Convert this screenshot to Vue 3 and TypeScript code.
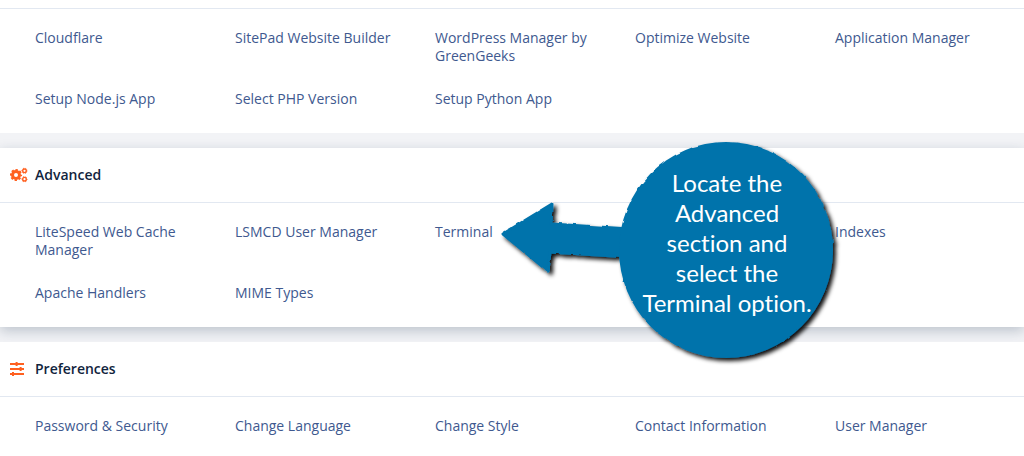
<script setup lang="ts">
interface Tool {
  label: string
  last?: boolean
}
interface Section {
  id: string
  title: string
  active?: boolean
  tools: Tool[]
}

const software: Tool[] = [
  { label: 'Cloudflare' },
  { label: 'SitePad Website Builder' },
  { label: 'WordPress Manager by GreenGeeks' },
  { label: 'Optimize Website' },
  { label: 'Application Manager' },
  { label: 'Setup Node.js App' },
  { label: 'Select PHP Version' },
  { label: 'Setup Python App' },
]

const sections: Section[] = [
  {
    id: 'advanced',
    title: 'Advanced',
    active: true,
    tools: [
      { label: 'LiteSpeed Web Cache Manager' },
      { label: 'LSMCD User Manager' },
      { label: 'Terminal' },
      { label: 'Indexes', last: true },
      { label: 'Apache Handlers' },
      { label: 'MIME Types' },
    ],
  },
  {
    id: 'preferences',
    title: 'Preferences',
    tools: [
      { label: 'Password & Security' },
      { label: 'Change Language' },
      { label: 'Change Style' },
      { label: 'Contact Information' },
      { label: 'User Manager' },
    ],
  },
]
</script>

<template>
  <main class="page">
    <section class="panel">
      <ul class="tools">
        <li v-for="tool in software" :key="tool.label">
          <a href="#">{{ tool.label }}</a>
        </li>
      </ul>
    </section>

    <section
      v-for="section in sections"
      :key="section.id"
      class="panel"
      :class="{ active: section.active }"
      :aria-labelledby="section.id"
    >
      <header class="head">
        <svg v-if="section.id === 'advanced'" class="icon" viewBox="0 0 18 16" aria-hidden="true">
          <g fill="none" stroke="currentColor">
            <circle cx="6" cy="8" r="3.5" stroke-width="3" />
            <circle cx="6" cy="8" r="5.2" stroke-width="1.8" stroke-dasharray="2.3 1.784" stroke-dashoffset="1.15" />
            <circle cx="14.5" cy="3.8" r="1.8" stroke-width="1.4" />
            <circle cx="14.5" cy="3.8" r="2.6" stroke-width="1" stroke-dasharray="1.3 1.423" stroke-dashoffset="0.65" />
            <circle cx="14.5" cy="12.2" r="1.8" stroke-width="1.4" />
            <circle cx="14.5" cy="12.2" r="2.6" stroke-width="1" stroke-dasharray="1.3 1.423" stroke-dashoffset="0.65" />
          </g>
        </svg>
        <svg v-else class="icon" viewBox="0 0 18 16" aria-hidden="true">
          <path
            fill="currentColor"
            d="M0 2h5.600V1h2v1H14v2H7.600V5h-2V4H0zM0 7h9.600V6h2v1H14v2h-2.400v1h-2V9H0zM0 12h2v-1h2v1h10v2H4v1H2v-1H0z"
          />
        </svg>
        <h2 :id="section.id">{{ section.title }}</h2>
      </header>
      <ul class="tools">
        <li v-for="tool in section.tools" :key="tool.label" :class="{ last: tool.last }">
          <a href="#">{{ tool.label }}</a>
        </li>
      </ul>
    </section>

    <aside class="callout">
      <svg class="shape" viewBox="0 0 344 228" aria-hidden="true">
        <defs>
          <filter id="brush" x="-5%" y="-5%" width="112%" height="112%">
            <feTurbulence type="fractalNoise" baseFrequency="0.14" numOctaves="1" seed="4" result="noise" />
            <feDisplacementMap in="SourceGraphic" in2="noise" scale="3" xChannelSelector="R" yChannelSelector="G" result="rough" />
            <feDropShadow in="rough" dx="3" dy="3" stdDeviation="2" flood-color="#000" flood-opacity="0.95" />
          </filter>
        </defs>
        <g filter="url(#brush)" fill="#0073ab">
          <path d="M3 97L52 67L51 87L130 92V120L50 115L48 134Z" stroke="#0073ab" stroke-width="3" stroke-linejoin="round" />
          <ellipse cx="226" cy="113" rx="107" ry="108" />
        </g>
      </svg>
      <p class="message">Locate the<br />Advanced<br />section and<br />select the<br />Terminal option.</p>
    </aside>
  </main>
</template>

<style>
body {
  margin: 0;
}
</style>

<style scoped>
.page {
  position: relative;
  display: flex;
  flex-direction: column;
  gap: 15px;
  height: 100vh;
  padding-top: 8px;
  box-sizing: border-box;
  overflow: hidden;
  background: linear-gradient(#fff 8px, #f2f3f6 8px);
  font-family: "Open Sans", "Noto Sans", sans-serif;
  font-size: 14px;
  line-height: 18px;
}

.panel {
  flex: none;
  background: #fff;
}

.active {
  box-shadow: 0 4px 12px rgba(20, 45, 75, 0.24);
}

.active + .panel {
  position: relative;
}

.head {
  display: flex;
  align-items: center;
  gap: 7px;
  height: 54px;
  padding-left: 10px;
}

.icon {
  flex: none;
  width: 18px;
  height: 16px;
  color: #ff6020;
}

h2 {
  margin: 0;
  color: #11243d;
  font-size: 14px;
  font-weight: 600;
}

.tools {
  display: grid;
  grid-template-columns: repeat(5, 165px);
  gap: 25px 35px;
  margin: 0;
  padding: 20px 0 25px 35px;
  border-top: 1px solid #e2e8f1;
  list-style: none;
}

.last {
  grid-column: 5;
}

a {
  color: #40598f;
  text-decoration: none;
}

.callout {
  position: absolute;
  z-index: 1;
  top: 137px;
  left: 500px;
  width: 344px;
}

.shape {
  display: block;
  width: 100%;
  overflow: visible;
}

.message {
  position: absolute;
  top: 31px;
  left: 120px;
  width: 214px;
  margin: 0;
  color: #fff;
  font-family: Lato, "Open Sans", sans-serif;
  font-size: 24px;
  font-variant-ligatures: none;
  line-height: 30px;
  text-align: center;
}
</style>
